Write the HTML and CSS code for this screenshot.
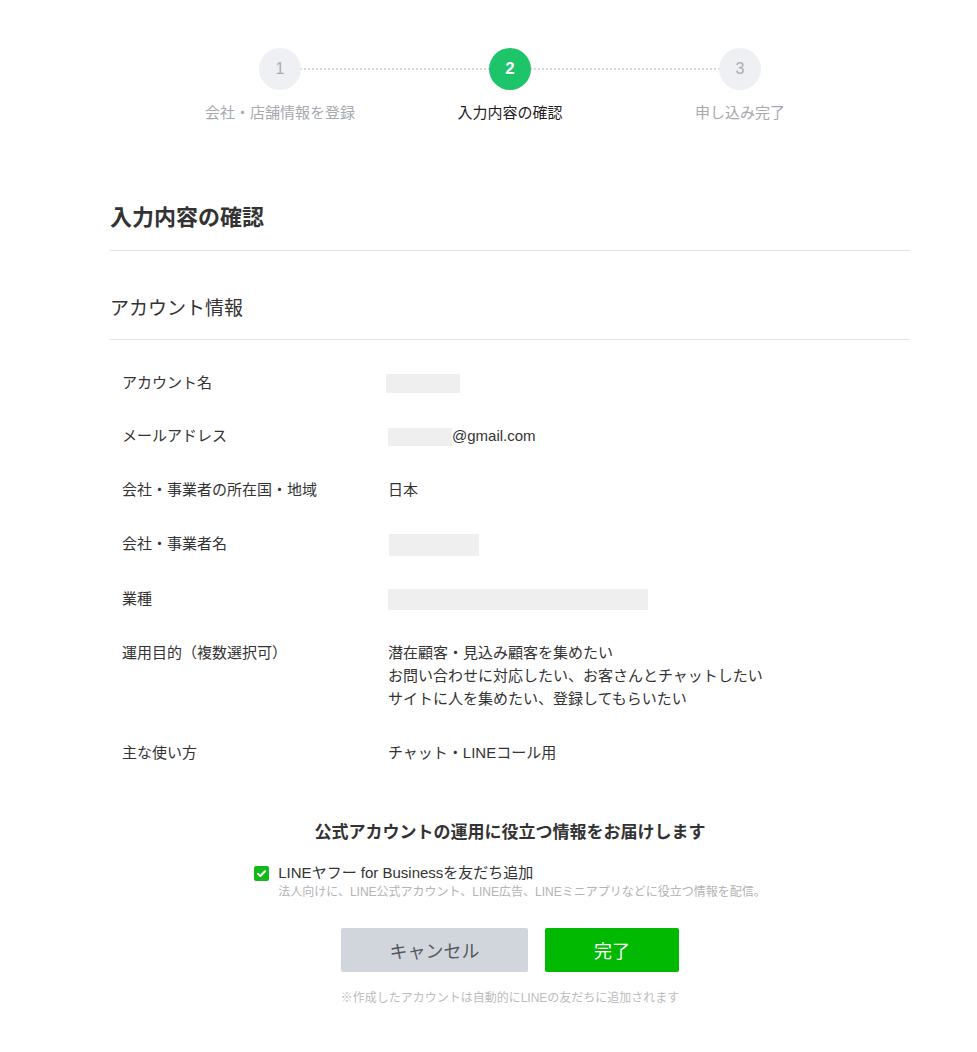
FILE: index.html
```html
<!DOCTYPE html>
<html lang="ja">
<head>
<meta charset="utf-8">
<title>入力内容の確認</title>
<link rel="stylesheet" href="styles.css">
</head>
<body>
<div class="page">
  <ol class="steps">
    <li class="step">
      <span class="circle">1</span>
      <span class="step-label">会社・店舗情報を登録</span>
    </li>
    <li class="step active">
      <span class="circle">2</span>
      <span class="step-label">入力内容の確認</span>
    </li>
    <li class="step">
      <span class="circle">3</span>
      <span class="step-label">申し込み完了</span>
    </li>
  </ol>

  <main class="content">
    <h1 class="title">入力内容の確認</h1>
    <h2 class="section-title">アカウント情報</h2>
    <dl class="info">
      <div class="row">
        <dt>アカウント名</dt>
        <dd><span class="mask mask-name"></span></dd>
      </div>
      <div class="row">
        <dt>メールアドレス</dt>
        <dd><span class="mask mask-mail"></span>@gmail.com</dd>
      </div>
      <div class="row">
        <dt>会社・事業者の所在国・地域</dt>
        <dd>日本</dd>
      </div>
      <div class="row">
        <dt>会社・事業者名</dt>
        <dd><span class="mask mask-company"></span></dd>
      </div>
      <div class="row">
        <dt>業種</dt>
        <dd><span class="mask mask-industry"></span></dd>
      </div>
      <div class="row">
        <dt>運用目的（複数選択可）</dt>
        <dd>潜在顧客・見込み顧客を集めたい<br>お問い合わせに対応したい、お客さんとチャットしたい<br>サイトに人を集めたい、登録してもらいたい</dd>
      </div>
      <div class="row">
        <dt>主な使い方</dt>
        <dd>チャット・LINEコール用</dd>
      </div>
    </dl>

    <section class="notice">
      <h3 class="notice-title">公式アカウントの運用に役立つ情報をお届けします</h3>
      <div class="check-wrap">
        <label class="check">
          <span class="box">
            <svg viewBox="0 0 15 15" width="15" height="15"><path d="M4 7.8 L6.4 10 L11 5.2" fill="none" stroke="#fff" stroke-width="2" stroke-linecap="round" stroke-linejoin="round"/></svg>
          </span>
          <span class="check-text">
            <span class="check-label">LINEヤフー for Businessを友だち追加</span>
            <span class="check-sub">法人向けに、LINE公式アカウント、LINE広告、LINEミニアプリなどに役立つ情報を配信。</span>
          </span>
        </label>
      </div>
      <div class="buttons">
        <button class="btn btn-cancel" type="button">キャンセル</button>
        <button class="btn btn-done" type="button">完了</button>
      </div>
      <p class="note">※作成したアカウントは自動的にLINEの友だちに追加されます</p>
    </section>
  </main>
</div>
</body>
</html>
```

FILE: styles.css
```css
* { box-sizing: border-box; }
html, body { margin: 0; padding: 0; background: #fff; }
body {
  font-family: "Liberation Sans", "Noto Sans CJK JP", sans-serif;
  color: #333;
}
.page {
  width: 977px;
  padding: 48px 67px 40px 110px;
}
.steps {
  list-style: none;
  margin: 0 auto;
  padding: 0;
  width: 690px;
  display: grid;
  grid-template-columns: repeat(3, 1fr);
}
.step {
  position: relative;
  display: flex;
  flex-direction: column;
  align-items: center;
}
.step + .step::before {
  content: "";
  position: absolute;
  top: 20px;
  right: 50%;
  width: 100%;
  border-top: 2px dotted #d4d7dc;
  z-index: 0;
}
.circle {
  position: relative;
  z-index: 1;
  width: 42px;
  height: 42px;
  border-radius: 50%;
  background: #eef0f4;
  color: #a7abb2;
  font-size: 16px;
  line-height: 42px;
  text-align: center;
  font-family: "Liberation Sans", sans-serif;
}
.step.active .circle {
  background: #1ec469;
  color: #fff;
  font-weight: bold;
  font-size: 17px;
}
.step-label {
  margin-top: 12px;
  font-size: 15px;
  line-height: 22px;
  color: #a6a9ae;
}
.step.active .step-label { color: #1e1e1e; }

.content { width: 800px; }
.title {
  margin: 79px 0 0;
  padding-bottom: 17px;
  font-size: 22px;
  line-height: 30px;
  font-weight: bold;
  color: #333;
  border-bottom: 1px solid #e3e3e3;
}
.section-title {
  margin: 44px 0 0;
  padding-bottom: 16px;
  font-size: 19px;
  line-height: 28px;
  font-weight: normal;
  color: #333;
  border-bottom: 1px solid #e3e3e3;
}
.info {
  margin: 0;
  padding: 15px 0 0 12px;
}
.row {
  display: grid;
  grid-template-columns: 266px 1fr;
  padding: 15.5px 0 15.3px;
  font-size: 15px;
  line-height: 23px;
}
.row dt { color: #333; }
.row dd { margin: 0; color: #333; display: block; }
.mask {
  display: inline-block;
  vertical-align: middle;
  background: #efefef;
}
.mask-name { width: 74px; height: 19px; margin-left: -2px; }
.mask-mail { width: 64px; height: 18px; }
.mask-company { width: 90px; height: 22px; margin-left: 1px; }
.mask-industry { width: 260px; height: 21px; }

.notice {
  margin-top: 41px;
  display: flex;
  flex-direction: column;
  align-items: center;
}
.notice-title {
  margin: 0;
  font-size: 17px;
  line-height: 26px;
  font-weight: bold;
  color: #333;
}
.check-wrap { margin-top: 16px; }
.check { display: flex; align-items: flex-start; gap: 9px; }
.box {
  margin-top: 4px;
  width: 15px;
  height: 15px;
  border-radius: 2px;
  background: #12b91b;
  display: flex;
}
.check-text { display: flex; flex-direction: column; }
.check-label { font-size: 15px; line-height: 21px; color: #333; }
.check-sub { margin-top: 1px; font-size: 12px; line-height: 17px; color: #b3b3b3; }
.buttons {
  margin-top: 27px;
  display: flex;
  gap: 17px;
}
.btn {
  height: 44px;
  border: 0;
  border-radius: 2px;
  font-family: inherit;
  cursor: pointer;
}
.btn-cancel {
  width: 187px;
  background: #d1d5dc;
  color: #555a60;
  font-size: 18px;
}
.btn-done {
  width: 134px;
  background: #00b900;
  color: #fff;
  font-size: 18px;
}
.note {
  margin: 17px 0 0;
  font-size: 12px;
  line-height: 18px;
  color: #bcbcbc;
}
```
